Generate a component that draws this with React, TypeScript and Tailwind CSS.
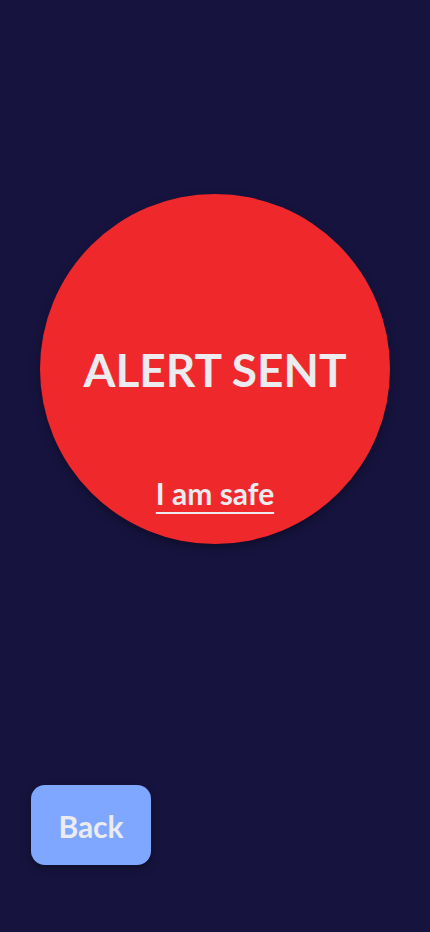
export default function App() {
  return (
    <div
      className="flex min-h-screen flex-col bg-[#16143f]"
      style={{ fontFamily: "Lato, 'Noto Sans', sans-serif" }}
    >
      {/* Alert circle */}
      <div className="mx-auto mt-[194px] flex h-[350px] w-[350px] flex-col items-center rounded-full bg-[#ef292b] pt-[148px] shadow-[0_4px_10px_rgba(0,0,0,0.35)]">
        <h1 className="text-[46px] font-bold leading-[1.2] text-[#ebebf0]">ALERT SENT</h1>
        <button className="mt-[78px] text-[30px] font-bold leading-[36px] text-[#ebebf0] underline decoration-2 underline-offset-[7px]">
          I am safe
        </button>
      </div>

      {/* Back */}
      <div className="mt-auto mb-[67px] ml-[31px]">
        <button className="flex h-[80px] w-[120px] items-center justify-center rounded-[14px] bg-[#7fa7ff] pt-[2px] text-[30px] font-bold text-[#ebebf0] shadow-[0_3px_8px_rgba(0,0,0,0.4)]">
          Back
        </button>
      </div>
    </div>
  )
}
